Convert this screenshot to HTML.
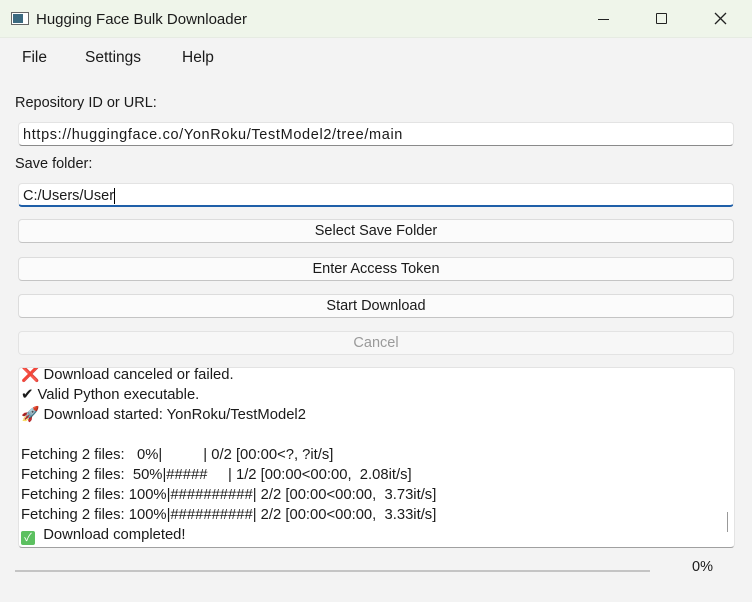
<!DOCTYPE html><html><head><style>
*{margin:0;padding:0;box-sizing:border-box}
body{width:752px;height:602px;background:#f3f3f3;font-family:"Liberation Sans","Noto Sans CJK JP",sans-serif;color:#1a1a1a;position:relative;overflow:hidden;font-size:14.5px}
.a{position:absolute}
#tb{left:0;top:0;width:752px;height:38px;background:#eff5ea;border-bottom:1px solid #e6ebe2}
.inp{background:#fff;border:1px solid #e3e3e3;border-bottom:1px solid #8a8a8a;border-radius:4px;height:24px;left:18px;width:716px;padding:4px 4px 0;font-size:14.5px}
.btn{background:#fbfbfb;border:1px solid #dcdcdc;border-bottom-color:#c4c4c4;border-radius:4px;height:24px;left:18px;width:716px;text-align:center;font-size:14.5px;line-height:23px}
#log{left:18px;top:367px;width:717px;height:181px;background:#fff;border:1px solid #e3e3e3;border-bottom-color:#a0a0a0;border-radius:4px;padding:0 0 0 2px;font-size:14.8px;line-height:20px;overflow:hidden;white-space:pre}
</style></head><body>
<div id="tb" class="a"></div>
<div class="a" style="left:11px;top:12px;width:18px;height:13px;border:1px solid #666;background:#fff"><div style="position:absolute;left:1px;top:1px;width:10px;height:9px;background:#3b6a80"></div></div>
<div class="a" style="left:36px;top:11px;font-size:15px">Hugging Face Bulk Downloader</div>
<div class="a" style="left:598px;top:19px;width:11px;height:1px;background:#222"></div>
<div class="a" style="left:656px;top:13px;width:11px;height:11px;border:1.5px solid #222;border-radius:1px"></div>
<svg class="a" style="left:714px;top:12px" width="13" height="13"><path d="M1 1L12 12M12 1L1 12" stroke="#222" stroke-width="1.3"/></svg>
<div class="a" style="left:22px;top:49px;font-size:15.5px">File</div>
<div class="a" style="left:85px;top:49px;font-size:15.5px">Settings</div>
<div class="a" style="left:182px;top:49px;font-size:15.5px">Help</div>
<div class="a" style="left:15px;top:95px">Repository ID or URL:</div>
<div class="a inp" style="top:122px;letter-spacing:0.65px">https://huggingface.co/YonRoku/TestModel2/tree/main</div>
<div class="a" style="left:15px;top:156px">Save folder:</div>
<div class="a inp" style="top:183px;border-bottom:2px solid #1f5fa8">C:/Users/User<span style="border-left:1px solid #000;margin-left:0"></span></div>
<div class="a btn" style="top:219px">Select Save Folder</div>
<div class="a btn" style="top:257px">Enter Access Token</div>
<div class="a btn" style="top:294px">Start Download</div>
<div class="a btn" style="top:331px;color:#9a9a9a;background:#f7f7f7;border-color:#e3e3e3">Cancel</div>
<div id="log" class="a"><div style="margin-top:-3px"><span style="color:#e0405a">❌</span> Download canceled or failed.
✔ Valid Python executable.
<span style="color:#d04070">🚀</span> Download started: YonRoku/TestModel2

Fetching 2 files:   0%|          | 0/2 [00:00&lt;?, ?it/s]
Fetching 2 files:  50%|#####     | 1/2 [00:00&lt;00:00,  2.08it/s]
Fetching 2 files: 100%|##########| 2/2 [00:00&lt;00:00,  3.73it/s]
Fetching 2 files: 100%|##########| 2/2 [00:00&lt;00:00,  3.33it/s]
<span style="display:inline-block;width:14px;height:14px;background:#5cc060;color:#fff;font-size:11px;line-height:14px;text-align:center;border-radius:2px;vertical-align:-2px">✓</span>  Download completed!</div></div>
<div class="a" style="left:727px;top:512px;width:1px;height:20px;background:#999"></div>
<div class="a" style="left:15px;top:570px;width:635px;height:2px;background:#c4c4c4"></div>
<div class="a" style="left:692px;top:559px">0%</div>
</body></html>
